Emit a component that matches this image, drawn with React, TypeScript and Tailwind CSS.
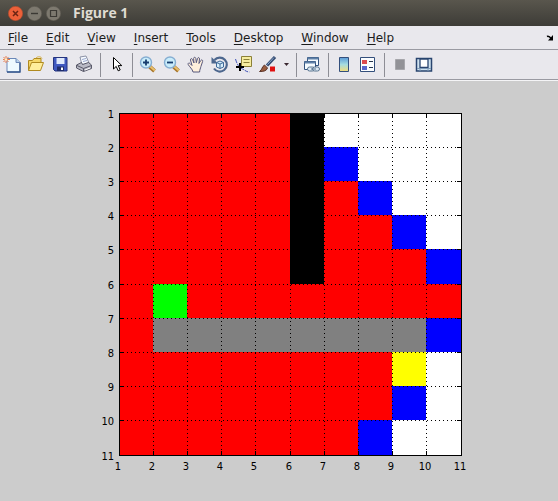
import React from "react";

// R explored, K wall, W unknown, B frontier, G start, Y goal, X gray wall
const MAP_ROWS: string[] = [
    "RRRRRKWWWW",
    "RRRRRKBWWW",
    "RRRRRKRBWW",
    "RRRRRKRRBW",
    "RRRRRKRRRB",
    "RGRRRRRRRR",
    "RXXXXXXXXB",
    "RRRRRRRRYW",
    "RRRRRRRRBW",
    "RRRRRRRBWW",
];

const CELL_COLORS: Record<string, string> = {
    R: "#ff0000",
    K: "#000000",
    W: "#ffffff",
    B: "#0000ff",
    G: "#00ff00",
    Y: "#ffff00",
    X: "#808080",
};

const MENU = ["File", "Edit", "View", "Insert", "Tools", "Desktop", "Window", "Help"];

const LEFT = 119;
const TOP = 32;
const SIZE = 342;

// Snap every grid line to a whole pixel
const at = (i: number) => Math.floor((i * SIZE) / 10);

const Icon: React.FC<{ children: React.ReactNode }> = ({ children }) => (
    <svg viewBox="0 0 20 20" className="h-5 w-5" aria-hidden="true">
        {children}
    </svg>
);

const ToolButton: React.FC<{ label: string; children: React.ReactNode }> = ({
    label,
    children,
}) => (
    <button
        type="button"
        aria-label={label}
        className="flex h-6 w-6 shrink-0 items-center justify-center">
        <Icon>{children}</Icon>
    </button>
);

const Separator: React.FC = () => (
    <div className="flex w-2 shrink-0 justify-center">
        <div className="h-6 w-px bg-[#8e8e96]" />
    </div>
);

const Magnifier: React.FC<{ plus?: boolean }> = ({ plus }) => (
    <>
        <path d="M11.5 11.5 16.5 16" stroke="#a8762c" strokeWidth="4" />
        <path d="M12 11.3 16.8 15.6" stroke="#e9c06c" strokeWidth="2" />
        <circle cx="8" cy="7.5" r="5.5" fill="#c9ecfa" stroke="#86aed2" strokeWidth="1.4" />
        <path
            d={plus ? "M5 7.5h6M8 4.5v6" : "M5 7.5h6"}
            stroke="#173c6e"
            strokeWidth="1.8"
        />
    </>
);

const TitleBar: React.FC = () => (
    <header className="flex h-[26px] items-center bg-linear-to-b from-[#59564d] to-[#3d3c37] pl-2">
        <div className="flex gap-1">
            <button type="button" aria-label="Close">
                <svg viewBox="0 0 15 15" className="h-[15px] w-[15px]">
                    <circle cx="7.5" cy="7.5" r="7.2" fill="#ec6039" stroke="#a8492d" strokeWidth=".6" />
                    <path d="m5 5 5 5m0-5-5 5" stroke="#6b2413" strokeWidth="1.5" />
                </svg>
            </button>
            <button type="button" aria-label="Minimize">
                <svg viewBox="0 0 15 15" className="h-[15px] w-[15px]">
                    <circle cx="7.5" cy="7.5" r="7.2" fill="#7d796f" stroke="#5b584f" strokeWidth=".6" />
                    <path d="M4 7.5h7" stroke="#3b3934" strokeWidth="1.4" />
                </svg>
            </button>
            <button type="button" aria-label="Maximize">
                <svg viewBox="0 0 15 15" className="h-[15px] w-[15px]">
                    <circle cx="7.5" cy="7.5" r="7.2" fill="#7d796f" stroke="#5b584f" strokeWidth=".6" />
                    <path d="M4.5 4.5h6v6h-6z" fill="none" stroke="#3b3934" strokeWidth="1.2" />
                </svg>
            </button>
        </div>
        <h1 className="ml-3 font-['Open_Sans',sans-serif] text-sm font-bold text-[#dfdbd2]">
            Figure 1
        </h1>
    </header>
);

const MenuBar: React.FC = () => (
    <nav className="flex h-6 items-center justify-between border-b border-[#9a9aa2] bg-[#e9e8ed] pr-1 pl-2">
        <div className="flex gap-[18px] text-xs text-[#1c1c1c]">
            {MENU.map((item) => (
                <button key={item} type="button">
                    <span className="underline underline-offset-2">{item[0]}</span>
                    {item.slice(1)}
                </button>
            ))}
        </div>
        <button type="button" aria-label="Dock figure">
            <svg viewBox="0 0 8 8" className="h-2 w-2">
                <path d="M1 2.5c2-1 3 .5 4.5 2.5" fill="none" stroke="#000" strokeWidth="1.6" />
                <path d="M7 1v5.500H2z" fill="#000" />
            </svg>
        </button>
    </nav>
);

const ToolBar: React.FC = () => (
    <div
        role="toolbar"
        aria-label="Figure tools"
        className="flex h-[30px] items-center border-b border-[#9a9aa2] bg-[#e9e8ed]">
        <ToolButton label="New figure">
            <path d="M5 3.5h9l4 4v9.5H5z" fill="#eefaff" stroke="#6b87b8" />
            <path d="M18 7.5V17H5" fill="none" stroke="#34568c" strokeWidth="1.3" />
            <path d="M14 3.5v4h4" fill="#b7d3ec" stroke="#6b87b8" />
            <path d="M4 1v7M1 4.5h7M1.5 2l5 5m0-5-5 5" stroke="#e67a4e" />
            <circle cx="4" cy="4.5" r="1.3" fill="#fff0c0" />
        </ToolButton>
        <ToolButton label="Open file">
            <path d="M2.5 15.5V5.5h4l1.500-2h7v4" fill="#f5d769" stroke="#b08a20" />
            <path d="m2.500 15.500 3-8h12l-3 8z" fill="#ffee9c" stroke="#b08a20" />
            <path d="M10 3c2-2 5-1.500 6 .5" fill="none" stroke="#d5ad3e" />
        </ToolButton>
        <ToolButton label="Save figure">
            <path d="M3.500 2.500h13.500v13.500h-12l-1.500-1.500z" fill="#4059c0" stroke="#25347e" />
            <path d="M6.500 3h8v6h-8z" fill="#dfe9fb" />
            <path d="M7 11.500h7V16H7z" fill="#1f2d6b" />
            <path d="M11 12.500h2V15h-2z" fill="#fff" />
        </ToolButton>
        <ToolButton label="Print figure">
            <path d="m6 2 6-1 3 7-7 2z" fill="#f6faff" stroke="#8c92a6" />
            <path d="m8 4.500 4-1m-3 3 4-1" stroke="#9caad0" />
            <path d="m2.500 10 5-2.500 1 2 6-2 3 2.500v3.500l-8 3-7-3.500z" fill="#b9bac5" stroke="#5a5a6a" />
            <path d="m3 10.500 6.500 3 8-3M9.500 13.500v3" fill="none" stroke="#5a5a6a" />
            <path d="m11 15 5-2" stroke="#fff" />
        </ToolButton>
        <Separator />
        <ToolButton label="Edit plot">
            <path
                d="M7.500 2.500v11.500l2.700-2.600 2 4.400 2-.9-2-4.300h3.600z"
                fill="#fff"
                stroke="#000"
            />
        </ToolButton>
        <Separator />
        <ToolButton label="Zoom in">
            <Magnifier plus />
        </ToolButton>
        <ToolButton label="Zoom out">
            <Magnifier />
        </ToolButton>
        <ToolButton label="Pan">
            <path
                d="M7 17c-.5-3-3.500-5-4.800-7.500-.6-1.500 1-2 2-.8L6 10.500 4.500 5C4.200 3.500 6 3.100 6.500 4.500L8 8 7.600 3.500c0-1.600 2-1.600 2.200 0l.5 4.200L11.500 3.500c.4-1.500 2.200-1 2 .5l-.6 4.500 1.900-3c.8-1.300 2.300-.3 1.800 1l-1.700 5c-.4 2-1.200 3-1.300 5.500z"
                fill="#fff0dc"
                stroke="#57587c"
            />
        </ToolButton>
        <ToolButton label="Rotate 3D">
            <path d="M4.500 5A7 7 0 1 1 4 13.500" fill="none" stroke="#4d678e" strokeWidth="2.200" />
            <path d="M1.500 2v6.500h6.500z" fill="#4d678e" />
            <path d="m10 6 3.500 1.500V12L10 13.500 6.500 12V7.500z" fill="#d7effb" stroke="#3f6999" />
            <path d="M6.500 7.500 10 9l3.500-1.500M10 9v4.500" fill="none" stroke="#3f6999" />
        </ToolButton>
        <ToolButton label="Data cursor">
            <path d="M1.500 4c1.500 5 3 8 7 10 3 1.500 4 3 7 3" fill="none" stroke="#4053b8" strokeDasharray="4 1" />
            <path d="M7.500 1.500h10v10h-10z" fill="#f6eda0" stroke="#8b8038" />
            <path d="M9.500 4.500h6m-6 3h6" stroke="#8b8038" />
            <path d="M2 12h8M6 8v8" stroke="#000" strokeWidth="2" />
        </ToolButton>
        <ToolButton label="Brush">
            <path d="m17 2-8 8.500" stroke="#334a70" strokeWidth="3.200" />
            <path d="m16 2.500-6.500 7" stroke="#8eabcf" />
            <path d="m6.500 10 3 3c-1 3-4 3.500-8 3.500 3-2 2-4.500 5-6.500z" fill="#9b5d3f" stroke="#593328" />
            <path d="M12 11.500h5v5h-5z" fill="#e01010" />
        </ToolButton>
        <button
            type="button"
            aria-label="Brush colors"
            className="flex h-6 w-3 shrink-0 items-center justify-center">
            <svg viewBox="0 0 5 3" className="h-[3px] w-[5px]">
                <path d="M0 0h5L2.500 3z" fill="#3a2730" />
            </svg>
        </button>
        <Separator />
        <ToolButton label="Link plot">
            <path d="M5.500 2.500h11v8h-11z" fill="#f5fbff" stroke="#33537e" />
            <path d="M5.500 3.500h11" stroke="#5f80a8" strokeWidth="2" />
            <path d="M2.500 6.500h11v8h-11z" fill="#f5fbff" stroke="#33537e" />
            <path d="M2.500 7.500h11" stroke="#5f80a8" strokeWidth="2" />
            <rect x="5.500" y="12" width="7" height="4" rx="2" fill="#dce8f2" stroke="#587490" />
            <rect x="10.500" y="12" width="7" height="4" rx="2" fill="#dce8f2" stroke="#587490" />
            <path d="M9 14h5" stroke="#587490" />
        </ToolButton>
        <Separator />
        <ToolButton label="Insert colorbar">
            <defs>
                <linearGradient id="colorbar" x1="0" y1="0" x2="0" y2="1">
                    <stop offset="0" stopColor="#5a9ad8" />
                    <stop offset=".5" stopColor="#a5dce0" />
                    <stop offset="1" stopColor="#f5dd7a" />
                </linearGradient>
            </defs>
            <path d="M5.500 2.500h9v14h-9z" fill="url(#colorbar)" stroke="#334f7c" />
        </ToolButton>
        <ToolButton label="Insert legend">
            <path d="M2.500 2.500h14v14h-14z" fill="#fbfdff" stroke="#334f7c" />
            <path d="M4 5h5v4H4z" fill="#dc4a50" />
            <path d="M4 11h5v4H4z" fill="#5866cf" />
            <path d="M11 6.500h4m-4 6h4" stroke="#26364f" />
        </ToolButton>
        <Separator />
        <ToolButton label="Hide plot tools">
            <path d="M5.500 4.500h9v10h-9z" fill="#929297" stroke="#a6a6ab" />
        </ToolButton>
        <ToolButton label="Show plot tools">
            <path d="M2.500 3.500h15v12.500h-15z" fill="#cfe2ef" stroke="#29446f" strokeWidth="1.500" />
            <path d="M6 4v8.500h8V4z" fill="#fff" stroke="#29446f" strokeWidth="1.300" />
            <path d="M3 13.500h14M6 13.500V16m8-2.500V16" stroke="#7f9bb8" />
        </ToolButton>
    </div>
);

const GridMap: React.FC = () => {
    const lines = Array.from({ length: 9 }, (_, i) => i + 1);
    const ticks = Array.from({ length: 11 }, (_, i) => i);

    return (
        <svg viewBox="0 0 558 420" className="block w-full" role="img" aria-label="Grid map">
            <g transform={`translate(${LEFT} ${TOP})`} shapeRendering="crispEdges">
                {MAP_ROWS.map((row, r) =>
                    row.split("").map((cell, c) => (
                        <rect
                            key={`${r}-${c}`}
                            x={at(c)}
                            y={at(r)}
                            width={at(c + 1) - at(c)}
                            height={at(r + 1) - at(r)}
                            fill={CELL_COLORS[cell]}
                        />
                    )),
                )}

                {/* Dotted grid and the short ticks on all four sides */}
                {lines.map((i) => (
                    <g key={i} stroke="#000">
                        <path
                            d={`M${at(i) + 0.5} 0V${SIZE}M0 ${at(i) + 0.5}H${SIZE}`}
                            strokeDasharray="1 3"
                        />
                        <path
                            d={`M${at(i) + 0.5} 0v4M${at(i) + 0.5} ${SIZE}v-4M0 ${at(i) + 0.5}h4M${SIZE} ${at(i) + 0.5}h-4`}
                        />
                    </g>
                ))}
                <path d={`M.5 .5H${SIZE + 0.5}V${SIZE + 0.5}H.5z`} fill="none" stroke="#000" />
            </g>

            <g className="font-['DejaVu_Sans_Condensed','DejaVu_Sans',sans-serif] text-[11px]">
                {ticks.map((i) => (
                    <React.Fragment key={i}>
                        <text x={LEFT - 5} y={TOP + at(i) + 5} textAnchor="end">
                            {i + 1}
                        </text>
                        <text x={LEFT + at(i) - 1} y={TOP + SIZE + 15} textAnchor="middle">
                            {i + 1}
                        </text>
                    </React.Fragment>
                ))}
            </g>
        </svg>
    );
};

const App: React.FC = () => {
    return (
        <div className="flex min-h-screen flex-col bg-[#cccccc] font-['DejaVu_Sans',sans-serif]">
            <TitleBar />
            <MenuBar />
            <ToolBar />
            <main className="border-t border-[#f4f4f6]">
                <GridMap />
            </main>
        </div>
    );
};

export default App;
